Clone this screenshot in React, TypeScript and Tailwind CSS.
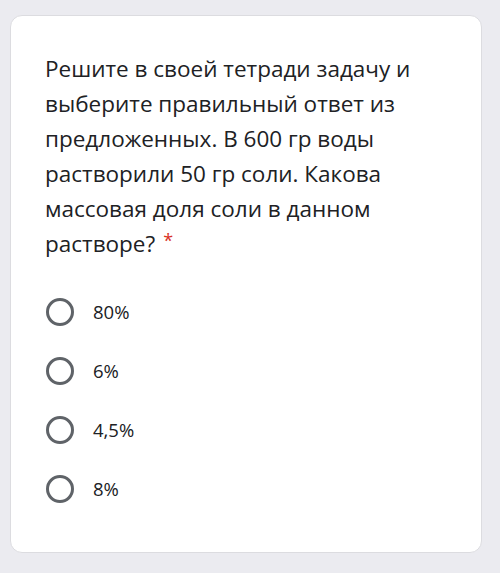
import React from 'react';

const options = ['80%', '6%', '4,5%', '8%'];

const App = () => {
  return (
    <div className="h-[573px] w-[500px] bg-[#ebebf0] pt-[15px] pl-[10px]" style={{ fontFamily: '"Open Sans", "Noto Sans", sans-serif' }}>
      <div className="h-[538px] w-[472px] rounded-[12px] border border-[#dcdce0] bg-white pl-[34px] pt-[35px]">
        {/* Question */}
        <p className="w-[425px] text-[22.5px] leading-[35px] text-[#202124]">
          Решите в своей тетради задачу и выберите правильный ответ из предложенных. В 600 гр воды растворили 50 гр соли. Какова массовая доля соли в данном растворе?
          <span className="ml-[8px] inline-block align-top text-[18px] leading-[28px] text-[#d93025]">*</span>
        </p>

        {/* Options */}
        <div className="mt-[21px] flex flex-col">
          {options.map((opt) => (
            <div key={opt} className="flex h-[59px] items-center">
              <div className="ml-[1px] h-[28px] w-[28px] rounded-full border-[3px] border-[#5f6368]" />
              <span className="ml-[19px] text-[18.5px] text-[#202124]">{opt}</span>
            </div>
          ))}
        </div>
      </div>
    </div>
  );
};

export default App;
